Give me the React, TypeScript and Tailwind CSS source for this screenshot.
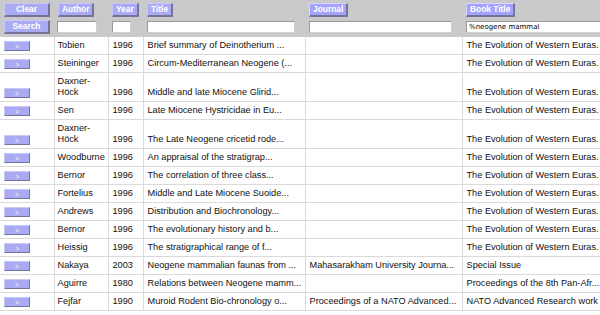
import React from "react";

const rows: [string, string, string, string, string][] = [
  ["Tobien", "1996", "Brief summary of Deinotherium ...", "", "The Evolution of Western Euras."],
  ["Steininger", "1996", "Circum-Mediterranean Neogene (...", "", "The Evolution of Western Euras."],
  ["Daxner-Höck", "1996", "Middle and late Miocene Glirid...", "", "The Evolution of Western Euras."],
  ["Sen", "1996", "Late Miocene Hystricidae in Eu...", "", "The Evolution of Western Euras."],
  ["Daxner-Höck", "1996", "The Late Neogene cricetid rode...", "", "The Evolution of Western Euras."],
  ["Woodburne", "1996", "An appraisal of the stratigrap...", "", "The Evolution of Western Euras."],
  ["Bernor", "1996", "The correlation of three class...", "", "The Evolution of Western Euras."],
  ["Fortelius", "1996", "Middle and Late Miocene Suoide...", "", "The Evolution of Western Euras."],
  ["Andrews", "1996", "Distribution and Biochronology...", "", "The Evolution of Western Euras."],
  ["Bernor", "1996", "The evolutionary history and b...", "", "The Evolution of Western Euras."],
  ["Heissig", "1996", "The stratigraphical range of f...", "", "The Evolution of Western Euras."],
  ["Nakaya", "2003", "Neogene mammalian faunas from ...", "Mahasarakham University Journa...", "Special Issue"],
  ["Aguirre", "1980", "Relations between Neogene mamm...", "", "Proceedings of the 8th Pan-Afr..."],
  ["Fejfar", "1990", "Muroid Rodent Bio-chronology o...", "Proceedings of a NATO Advanced...", "NATO Advanced Research work"],
];

function HBtn({ label, wide, bright }: { label: string; wide?: boolean; bright?: boolean }) {
  return (
    <div
      className={
        "inline-flex items-center justify-center text-white font-bold text-[8.4px] leading-none font-['Liberation_Sans',Arial,sans-serif] border-t border-l border-r-2 border-b-2 border-r-[#74749a] border-b-[#74749a] " +
        (bright ? "bg-[#a3a3fb] border-t-[#d6d6ff] border-l-[#d6d6ff] " : "bg-[#aaaaf2] border-t-[#c8c8f8] border-l-[#c8c8f8] ") +
        (wide ? "w-[46px] h-[14px]" : "px-[3px] h-[14px]")
      }
    >
      {label}
    </div>
  );
}

function Field({ w, value }: { w: string; value?: string }) {
  return (
    <input
      readOnly
      value={value ?? ""}
      className={
        "block h-[12px] bg-white border border-[#9a9a9a] border-r-[#d0d0d0] border-b-[#d0d0d0] text-[7px] leading-none px-[2px] text-black font-['DejaVu_Sans',sans-serif] outline-none " +
        w
      }
    />
  );
}

export default function App() {
  return (
    <div className="w-[600px] h-[315px] overflow-hidden bg-white">
      <table className="table-fixed border-collapse w-[680px] font-['Liberation_Sans',Arial,sans-serif] text-[9.2px] text-[#111]">
        <colgroup>
          <col className="w-[54px]" />
          <col className="w-[54px]" />
          <col className="w-[35px]" />
          <col className="w-[162px]" />
          <col className="w-[157px]" />
          <col className="w-[218px]" />
        </colgroup>
        <thead className="bg-[#c9c9c9]">
          <tr className="h-[19px]">
            <td className="align-top pt-[3px] pl-[4px]"><HBtn label="Clear" wide /></td>
            <td className="align-top pt-[3px] pl-[4px]"><HBtn label="Author" /></td>
            <td className="align-top pt-[3px] pl-[4px]"><HBtn label="Year" /></td>
            <td className="align-top pt-[3px] pl-[4px]"><HBtn label="Title" /></td>
            <td className="align-top pt-[3px] pl-[4px]"><HBtn label="Journal" bright /></td>
            <td className="align-top pt-[3px] pl-[4px]"><HBtn label="Book Title" bright /></td>
          </tr>
          <tr className="h-[18px]">
            <td className="align-top pt-[1px] pl-[4px]"><HBtn label="Search" wide /></td>
            <td className="align-top pt-[2px] pl-[3px]"><Field w="w-[40px]" /></td>
            <td className="align-top pt-[2px] pl-[4px]"><Field w="w-[19px]" /></td>
            <td className="align-top pt-[2px] pl-[4px]"><Field w="w-[148px]" /></td>
            <td className="align-top pt-[2px] pl-[4px]"><Field w="w-[143px]" /></td>
            <td className="align-top pt-[2px] pl-[4px]"><Field w="w-[160px]" value="%neogene mammal" /></td>
          </tr>
        </thead>
        <tbody>
          {rows.map((r, i) => (
            <tr key={i} className="border-b border-[#dadada]">
              <td className="align-bottom pl-[4px] py-[3px] leading-[11px]">
                <div className="w-[26px] h-[10px] bg-[#aaaaf2] border-r border-b border-r-[#74749a] border-b-[#74749a] border-t border-l border-t-[#c8c8f8] border-l-[#c8c8f8] flex items-center justify-center text-white text-[7px] leading-none">
                  &gt;
                </div>
              </td>
              <td className="align-bottom border-l border-[#dadada] pl-[3px] pr-[1px] py-[3px] leading-[11px]">{r[0]}</td>
              <td className="align-bottom border-l border-[#dadada] pl-[4px] py-[3px] leading-[11px] whitespace-nowrap">{r[1]}</td>
              <td className="align-bottom border-l border-[#dadada] pl-[4px] py-[3px] leading-[11px] whitespace-nowrap overflow-hidden">{r[2]}</td>
              <td className="align-bottom border-l border-[#dadada] pl-[4px] py-[3px] leading-[11px] whitespace-nowrap overflow-hidden">{r[3]}</td>
              <td className="align-bottom border-l border-[#dadada] pl-[4px] py-[3px] leading-[11px] whitespace-nowrap overflow-hidden">{r[4]}</td>
            </tr>
          ))}
        </tbody>
      </table>
    </div>
  );
}
